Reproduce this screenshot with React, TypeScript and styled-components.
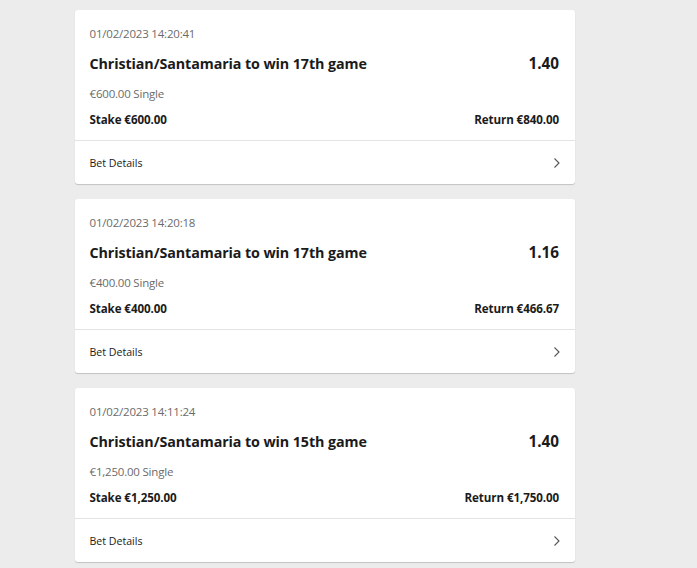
import React from "react";
import styled, { createGlobalStyle } from "styled-components";

const Global = createGlobalStyle`
  html, body { margin: 0; padding: 0; background: #ebeceb; }
  body { font-family: "Open Sans", "Noto Sans", Arial, sans-serif; }
`;

const Page = styled.div`
  width: 697px;
  height: 568px;
  overflow: hidden;
  padding: 10px 0 0 75px;
  box-sizing: border-box;
  display: flex;
  flex-direction: column;
  gap: 15px;
`;

const Card = styled.div`
  width: 500px;
  background: #fff;
  border-radius: 3px;
  box-shadow: 0 1px 1px rgba(0, 0, 0, 0.18);
  display: flex;
  flex-direction: column;
`;

const Body = styled.div`
  padding: 13px 16px 11px 14.5px;
  display: flex;
  flex-direction: column;
`;

const Row = styled.div<{ $mt?: number }>`
  display: flex;
  justify-content: space-between;
  align-items: center;
  height: 20px;
  margin-top: ${(p) => p.$mt ?? 0}px;
`;

const Muted = styled.span`
  font-size: 11.5px;
  letter-spacing: -0.2px;
  color: #6b6b6b;
`;

const Title = styled.span`
  font-size: 14.3px;
  font-weight: 700;
  color: #1b1b1b;
  letter-spacing: -0.1px;
`;

const Odds = styled.span`
  font-size: 15.3px;
  font-weight: 700;
  color: #1b1b1b;
`;

const Strong = styled.span`
  font-size: 11.6px;
  font-weight: 700;
  color: #1b1b1b;
  letter-spacing: -0.1px;
`;

const Footer = styled.div`
  border-top: 1px solid #e3e3e3;
  height: 43px;
  padding: 0 14px 0 14.5px;
  display: flex;
  align-items: center;
  justify-content: space-between;
  font-size: 10.6px;
  color: #1b1b1b;
`;

const Chevron = () => (
  <svg width="8" height="12" viewBox="0 0 8 12">
    <path d="M1.5 1.5 L6 6 L1.5 10.5" fill="none" stroke="#555" strokeWidth="1.1" />
  </svg>
);

const bets = [
  { date: "01/02/2023 14:20:41", title: "Christian/Santamaria to win 17th game", odds: "1.40", single: "€600.00 Single", stake: "Stake €600.00", ret: "Return €840.00" },
  { date: "01/02/2023 14:20:18", title: "Christian/Santamaria to win 17th game", odds: "1.16", single: "€400.00 Single", stake: "Stake €400.00", ret: "Return €466.67" },
  { date: "01/02/2023 14:11:24", title: "Christian/Santamaria to win 15th game", odds: "1.40", single: "€1,250.00 Single", stake: "Stake €1,250.00", ret: "Return €1,750.00" },
];

export default function App() {
  return (
    <>
      <Global />
      <Page>
        {bets.map((b, i) => (
          <Card key={i}>
            <Body>
              <Row><Muted>{b.date}</Muted></Row>
              <Row $mt={10}><Title>{b.title}</Title><Odds>{b.odds}</Odds></Row>
              <Row $mt={10}><Muted>{b.single}</Muted></Row>
              <Row $mt={6}><Strong>{b.stake}</Strong><Strong>{b.ret}</Strong></Row>
            </Body>
            <Footer>
              <span>Bet Details</span>
              <Chevron />
            </Footer>
          </Card>
        ))}
      </Page>
    </>
  );
}
